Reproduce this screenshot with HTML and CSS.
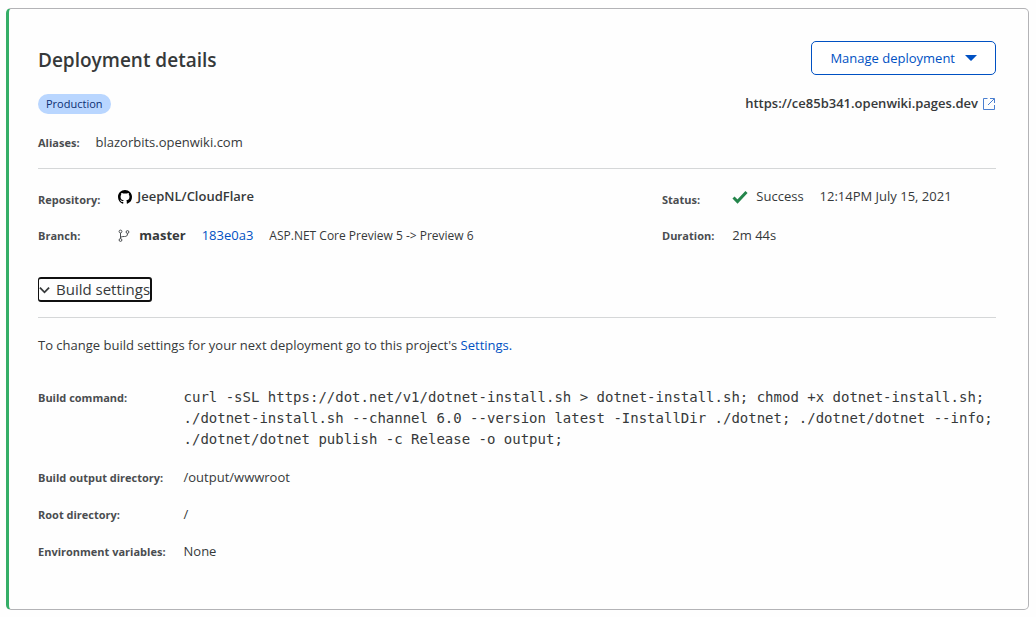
FILE: index.html
```html
<!DOCTYPE html>
<html lang="en">
<head>
<meta charset="utf-8">
<meta name="viewport" content="width=device-width, initial-scale=1">
<title>Deployment details</title>
<link rel="stylesheet" href="styles.css">
</head>
<body>
<main class="card">
  <header class="head">
    <h1 class="title">Deployment details</h1>
    <button class="manage" type="button">Manage deployment
      <svg class="caret" viewBox="0 0 12 6" aria-hidden="true"><path d="M0 0h12L6.6 5.6a.9.9 0 0 1-1.2 0z"/></svg>
    </button>
  </header>
  <div class="subhead">
    <span class="badge">Production</span>
    <a class="site" href="#">https://ce85b341.openwiki.pages.dev
      <svg class="external" viewBox="0 0 14 14" aria-hidden="true"><path d="M5.500 1.500H1.500v11h11V8M8 1.500h4.500V6M12.200 1.800 6 8"/></svg>
    </a>
  </div>
  <dl class="aliases">
    <dt class="label">Aliases:</dt>
    <dd class="value">blazorbits.openwiki.com</dd>
  </dl>
  <section class="summary">
    <dl class="facts">
      <dt class="label label-low">Repository:</dt>
      <dd class="value repo">
        <svg class="github" viewBox="0 0 16 16" aria-hidden="true"><path d="M8 0C3.58 0 0 3.58 0 8c0 3.54 2.29 6.53 5.47 7.59.4.07.55-.17.55-.38 0-.19-.01-.82-.01-1.49-2.01.37-2.53-.49-2.69-.94-.09-.23-.48-.94-.82-1.13-.28-.15-.68-.52-.01-.53.63-.01 1.08.58 1.23.82.72 1.21 1.87.87 2.33.66.07-.52.28-.87.51-1.07-1.78-.2-3.64-.89-3.64-3.95 0-.87.31-1.59.82-2.15-.08-.2-.36-1.02.08-2.12 0 0 .67-.21 2.2.82.64-.18 1.32-.27 2-.27s1.36.09 2 .27c1.53-1.04 2.2-.82 2.2-.82.44 1.1.16 1.92.08 2.12.51.56.82 1.27.82 2.15 0 3.07-1.87 3.75-3.65 3.95.29.25.54.73.54 1.48 0 1.07-.01 1.93-.01 2.2 0 .21.15.46.55.38A8.01 8.01 0 0 0 16 8c0-4.42-3.58-8-8-8z"/></svg>
        <span>JeepNL/CloudFlare</span>
      </dd>
      <dt class="label">Branch:</dt>
      <dd class="value branch">
        <svg class="fork" viewBox="0 0 12 14" aria-hidden="true"><circle cx="2.500" cy="2.500" r="1.400"/><circle cx="9.500" cy="3" r="1.400"/><circle cx="2.500" cy="11" r="1.400"/><path d="M2.500 4v5.500M9.500 4.500c0 2.500-1 3-3 3-2.500 0-4 .2-4 1.800"/></svg>
        <strong>master</strong>
        <a class="link commit" href="#">183e0a3</a>
        <span class="message">ASP.NET Core Preview 5 -&gt; Preview 6</span>
      </dd>
    </dl>
    <dl class="facts">
      <dt class="label label-low">Status:</dt>
      <dd class="value status">
        <svg class="check" viewBox="0 0 16 14" aria-hidden="true"><path d="M1.500 7.500 5.500 11.500 14.500 2"/></svg>
        <span>Success</span>
        <time datetime="2021-07-15T12:14">12:14PM July 15, 2021</time>
      </dd>
      <dt class="label">Duration:</dt>
      <dd class="value">2m 44s</dd>
    </dl>
  </section>
  <div class="toggle-row">
    <button class="toggle" type="button" aria-expanded="true">
      <svg class="chevron" viewBox="0 0 12 8" aria-hidden="true"><path d="M1 1.500 6 6.500 11 1.500"/></svg>Build settings</button>
  </div>
  <section class="build">
    <p class="hint">To change build settings for your next deployment go to this project's <a class="link" href="#">Settings.</a></p>
    <dl class="settings">
      <dt class="label">Build command:</dt>
      <dd class="value"><code class="command">curl -sSL https://dot.net/v1/dotnet-install.sh &gt; dotnet-install.sh; chmod +x dotnet-install.sh; ./dotnet-install.sh --channel 6.0 --version latest -InstallDir ./dotnet; ./dotnet/dotnet --info; ./dotnet/dotnet publish -c Release -o output;</code></dd>
      <dt class="label">Build output directory:</dt>
      <dd class="value">/output/wwwroot</dd>
      <dt class="label">Root directory:</dt>
      <dd class="value">/</dd>
      <dt class="label">Environment variables:</dt>
      <dd class="value">None</dd>
    </dl>
  </section>
</main>
</body>
</html>
```

FILE: styles.css
```css
* { box-sizing: border-box; }
body {
  margin: 0;
  padding: 8px 7px 7px 6px;
  background: #fefefe;
  color: #36393a;
  font: 13px/21px "Open Sans", "Noto Sans", sans-serif;
}
dl, dd, p, h1 { margin: 0; }
svg { flex: none; fill: none; }
button { font: inherit; cursor: pointer; }
a { text-decoration: none; }
.link { color: #0051c3; }

.card {
  padding: 32px 32px 47px 29px;
  border: 1px solid #b3b3b6;
  border-left: 3px solid #35ae67;
  border-radius: 5px;
}
.head, .subhead {
  display: flex;
  align-items: center;
  justify-content: space-between;
}
.title {
  padding-top: 4px;
  font-size: 19px;
  line-height: 28px;
  font-weight: 600;
}
.manage {
  display: flex;
  align-items: center;
  gap: 10px;
  height: 34px;
  padding: 0 18px;
  border: 1px solid #0051c3;
  border-radius: 5px;
  background: #fff;
  color: #0051c3;
  font-size: 13px;
}
.caret { width: 12px; height: 6px; fill: #0051c3; }
.subhead { margin-top: 18px; }
.badge {
  padding: 0 8px;
  border-radius: 10px;
  background: #b9d6ff;
  color: #0c2f73;
  font-size: 11px;
  line-height: 20px;
}
.site {
  display: flex;
  align-items: center;
  gap: 4px;
  color: #36393a;
  font-weight: 600;
}
.external { width: 14px; height: 14px; stroke: #4a7fd0; stroke-width: 1; }

.label {
  color: #4a4d50;
  font-size: 11px;
  font-weight: 700;
  white-space: nowrap;
}
.aliases {
  display: flex;
  gap: 16px;
  margin-top: 18px;
  padding-bottom: 15px;
  border-bottom: 1px solid #d5d7d8;
}
.summary {
  display: grid;
  grid-template-columns: 624px 1fr;
  padding-top: 17px;
}
.facts {
  display: grid;
  grid-template-columns: auto 1fr;
  gap: 18px;
  align-content: start;
}
.label-low { padding-top: 3px; margin-bottom: -3px; }
.repo, .branch, .status { display: flex; align-items: center; }
.repo { gap: 5px; font-weight: 600; }
.github { width: 14px; height: 14px; fill: #000; }
.fork { width: 12px; height: 14px; margin-right: 9px; stroke: #4a4d50; }
.commit { margin: 0 16px; }
.message { font-size: 12px; }
.check { width: 16px; height: 14px; margin-right: 8px; stroke: #24854b; stroke-width: 3; }
.status time { margin-left: 16px; }

.toggle-row {
  display: flex;
  margin-top: 31px;
  padding-bottom: 15px;
  border-bottom: 1px solid #d5d7d8;
}
.toggle {
  display: flex;
  align-items: center;
  gap: 6px;
  height: 25px;
  padding: 0;
  border: 2px solid #101010;
  border-left-width: 1px;
  border-radius: 3px;
  background: none;
  color: #36393a;
  font-size: 15px;
}
.chevron { width: 11px; height: 8px; stroke: #36393a; stroke-width: 2; }

.hint { margin-top: 17px; }
.settings {
  display: grid;
  grid-template-columns: auto 1fr;
  gap: 16px 18px;
  margin-top: 31px;
}
.command {
  display: block;
  padding-bottom: 1px;
  font: 14px/21px "DejaVu Sans Mono", monospace;
}
```
